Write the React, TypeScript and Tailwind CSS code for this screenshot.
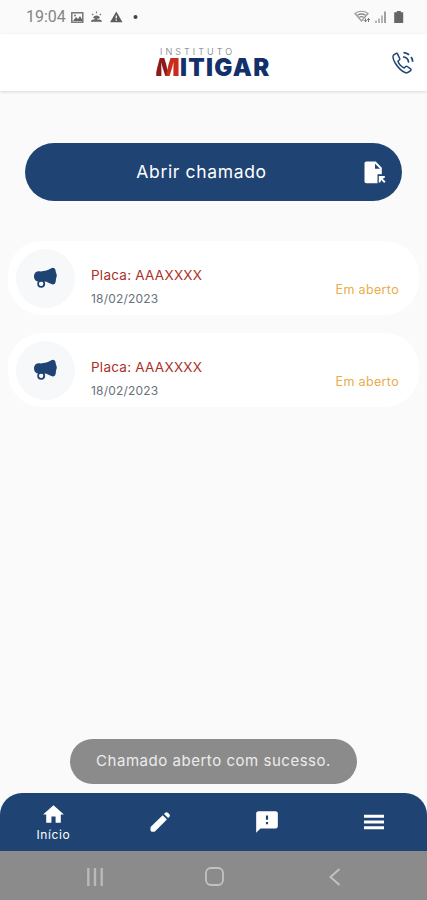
import type { ReactNode } from 'react';
import { MdHome, MdFeedback } from 'react-icons/md';

interface Ticket {
  id: number;
  plate: string;
  date: string;
  status: string;
}

const tickets: Ticket[] = [
  { id: 1, plate: 'AAAXXXX', date: '18/02/2023', status: 'Em aberto' },
  { id: 2, plate: 'AAAXXXX', date: '18/02/2023', status: 'Em aberto' },
];

export default function App() {
  return (
    <div className="flex h-[900px] w-[427px] flex-col overflow-hidden bg-[#fafafa] font-['Inter',sans-serif]">
      <StatusBar />
      <Header />

      <main className="flex flex-1 flex-col px-2 pt-[52px]">
        <button className="mx-[17px] flex h-[58px] items-center rounded-full bg-[#1f4373] pr-[16px] pl-[14px] text-white">
          <span className="flex-1 text-center text-[17.5px] leading-none tracking-[0.65px] whitespace-nowrap">
            Abrir chamado
          </span>
          <FileIcon />
        </button>

        <div className="mt-[40px] flex flex-col gap-[18px]">
          {tickets.map((t) => (
            <TicketCard key={t.id} ticket={t} />
          ))}
        </div>

        {/* Toast */}
        <div className="mt-auto mb-[9px] ml-[62px] flex h-[45px] w-[287px] items-center justify-center rounded-full bg-[#8b8b8b] text-[15px] tracking-[0.53px] whitespace-nowrap text-[#ececec]">
          Chamado aberto com sucesso.
        </div>
      </main>

      <TabBar />
      <SystemNav />
    </div>
  );
}

function StatusBar() {
  return (
    <div className="flex h-[34px] shrink-0 items-center justify-between pr-[22px] pl-[26px] text-[#666]">
      <div className="flex items-center">
        <span className="w-[45px] font-['Roboto',sans-serif] text-[16px] leading-none text-[#858585]">19:04</span>
        <svg width="70" height="16" viewBox="0 0 70 16" fill="none">
          <rect x="0.8" y="3.8" width="11" height="9.4" stroke="#777" strokeWidth="1.5" />
          <path d="M2 12l3-4 2 2 2-3 3 5z" fill="#666" />
          <circle cx="4" cy="6.5" r="1" fill="#777" />
          <path d="M20 12.8c0-2 2-2.5 3-2 1-1.5 3-1.5 4 0 2-1 4 0 4 2zM22 8.5a4 4 0 0 1 7 0l-1.4 1.2h-4z" fill="#666" />
          <path d="M25.5 2.5v1.8M21 5l1.3 1M30 5l-1.3 1" stroke="#777" strokeWidth="1.2" />
          <path d="M45.3 2.5l6.2 10.7H39.1z" fill="#5c5c5c" />
          <path d="M45.3 6.5v3M45.3 10.6v1.2" stroke="#eee" strokeWidth="1.4" />
          <circle cx="64.5" cy="8" r="2" fill="#444" />
        </svg>
      </div>
      <svg width="51" height="16" viewBox="0 0 51 16" fill="none">
        <path d="M1 4.5q6.5-4.5 13 0L7.5 12z" stroke="#999" strokeWidth="1.2" />
        <path d="M3.5 6.2q4-2.4 8 0M5.2 8.3q2.3-1.3 4.6 0" stroke="#888" strokeWidth="1.3" />
        <path d="M11.5 13V9.5M10 11.2l1.5 1.6 1.2-1.6M14.5 13V9.3M13.2 11l1.3-1.6 1.4 1.6" stroke="#777" strokeWidth="1" />
        <path d="M22 14v-2.5M25 14V9.5M28 14V6.5" stroke="#aaa" strokeWidth="1.7" />
        <path d="M31 14V2.5" stroke="#808080" strokeWidth="1.5" />
        <path d="M42.8 2h4v1.3h2.4V14h-9V3.3h2.6z" fill="#666" />
      </svg>
    </div>
  );
}

function Header() {
  return (
    <header className="z-10 flex h-[57px] shrink-0 items-center bg-white pr-[12px] pl-[155px] shadow-[0_1px_3px_rgba(0,0,0,0.14)]">
      <div className="flex flex-1 flex-col">
        <span className="pl-[5px] text-[9px] leading-[10px] font-light tracking-[3.05px] text-[#70747c]">
          INSTITUTO
        </span>
        <span className="mt-[-1px] flex text-[24px] leading-[23px] font-black text-[#14306b]">
          <span className="w-[25px] origin-left scale-x-[1.08] bg-linear-[100deg,#8e1919_45%,#c92b1d_50%] bg-clip-text text-transparent [clip-path:polygon(20%_0,100%_0,100%_100%,0_100%,0_90%)]">
            M
          </span>
          <span className="tracking-[1.3px]">ITIGAR</span>
        </span>
      </div>
      <svg width="24" height="24" viewBox="0 0 24 24" fill="none" stroke="#1f4373" strokeWidth="1.5" strokeLinejoin="round" strokeLinecap="round">
        <path d="M5.2 2.3L2.8 3.8C1.4 5.3 2.3 9 4.5 12.5C7.2 16.8 11.5 20.6 14.7 21.8C16.4 22.4 18 21 19.6 19.6C20.2 19 20.1 18.3 19.5 17.8L16.3 15.5C15.6 15 15 15.2 14.5 15.8L13.2 17C10.6 15.8 7.9 13 6.9 10.3L8.3 9C8.9 8.5 9 7.9 8.6 7.3L6.5 2.9C6.2 2.2 5.8 2 5.2 2.3z" />
        <path d="M12.5 1.7c5 .2 8.8 4 9.2 9" strokeWidth="1.8" strokeDasharray="6 3" strokeLinecap="butt" />
        <path d="M12.7 6c2.6.3 4.4 2.2 4.8 4.8" strokeWidth="1.7" />
      </svg>
    </header>
  );
}

function TicketCard({ ticket }: { ticket: Ticket }) {
  return (
    <article className="flex h-[74px] items-center rounded-[34px] bg-white pr-[20px] pl-[8px]">
      <div className="flex size-[59px] shrink-0 items-center justify-center rounded-full bg-[#f6f8fa]">
        <MegaphoneIcon />
      </div>
      <div className="ml-[16px] flex flex-1 flex-col gap-[8px] pt-[17px] leading-4">
        <p className="text-[13.5px] tracking-[0.25px] text-[#ab3028]">Placa: {ticket.plate}</p>
        <p className="text-[12px] tracking-[0.2px] text-[#69717d]">{ticket.date}</p>
      </div>
      <span className="pt-[24px] text-[12.5px] leading-4 tracking-[0.35px] text-[#e9ad49]">{ticket.status}</span>
    </article>
  );
}

function TabItem({ children }: { children: ReactNode }) {
  return <button className="flex h-full flex-1 flex-col items-center justify-center text-white">{children}</button>;
}

function TabBar() {
  return (
    <nav className="flex h-[58px] shrink-0 rounded-t-[22px] bg-[#1f4373]">
      <TabItem>
        <MdHome size={25} />
        <span className="text-[12px] leading-4 tracking-[0.6px]">Início</span>
      </TabItem>
      <TabItem>
        <svg width="24" height="24" viewBox="0 0 24 24" fill="currentColor">
          <path d="M2.8 16.8L14.7 5.2l4.2 4.2L7.2 21.2c-.4.4-.9.6-1.5.6H4.4c-1 0-1.9-.8-1.9-1.9V18c0-.5.1-.9.3-1.2z" />
          <path d="M16 4l1.2-1.2c.8-.8 1.9-.8 2.7 0l1.4 1.4c.8.8.8 1.9 0 2.7l-1.2 1.2z" />
        </svg>
      </TabItem>
      <TabItem>
        <MdFeedback size={26} />
      </TabItem>
      <TabItem>
        <svg width="20" height="16" viewBox="0 0 20 16" fill="currentColor">
          <path d="M0 .8h20v3H0zM0 6.5h20v3H0zM0 12.2h20v3H0z" />
        </svg>
      </TabItem>
    </nav>
  );
}

function SystemNav() {
  return (
    <div className="flex h-[49px] shrink-0 items-center bg-[#8b8b8b] pt-[2px] pl-[86px]">
      <svg width="18" height="18" viewBox="0 0 18 18" stroke="#b9b9b9" strokeWidth="2.4">
        <path d="M2.3 0v18M9 0v18M15.7 0v18" />
      </svg>
      <svg className="ml-[101px]" width="19" height="19" viewBox="0 0 19 19" fill="none" stroke="#c2c2c2" strokeWidth="1.8">
        <rect x="1" y="1" width="17" height="17" rx="5" />
      </svg>
      <svg className="ml-[104px]" width="13" height="18" viewBox="0 0 13 18" fill="none" stroke="#c2c2c2" strokeWidth="1.9">
        <path d="M11.5 1L2.5 9l9 8" />
      </svg>
    </div>
  );
}

function FileIcon() {
  return (
    <svg width="22" height="23" viewBox="0 0 22 23">
      <path
        d="M2.5.5h9.3l6 6.2v6.6h-4.3v8.9h-11C1.2 22.2.5 21.4.5 20.2V2.6C.5 1.3 1.2.5 2.5.5zM11 2.8v5h5z"
        fill="#fff"
        fillRule="evenodd"
      />
      <path d="M14.8 15h6v1.8l-2.2 1 3 2.8-1.4 1.5-3-3-1 2.4h-1.4z" fill="#fff" />
    </svg>
  );
}

function MegaphoneIcon() {
  return (
    <svg width="25" height="22" viewBox="0 0 25 22" fill="#1f4373">
      <path d="M5.8 4.3C10.5 4.8 15 3.3 18.3 1.3c2-1.3 3.9-.2 4.2 2 .2 1.3.4 2.4.8 3.2.7 1.2.6 3 0 4.2-.4 1-.3 2.4-.6 3.8-.3 2.5-2.3 3.6-4.4 2.6-2.3-1.3-4.4-2.4-6.4-2.6H5C2.3 14.3 1 12 1 9.5s1.6-5.5 4.8-5.2z" />
      <circle cx="8.2" cy="16.8" r="3" fill="none" stroke="#1f4373" strokeWidth="1.9" />
      <circle cx="8.2" cy="16.8" r="2.1" fill="#f6f8fa" />
    </svg>
  );
}
